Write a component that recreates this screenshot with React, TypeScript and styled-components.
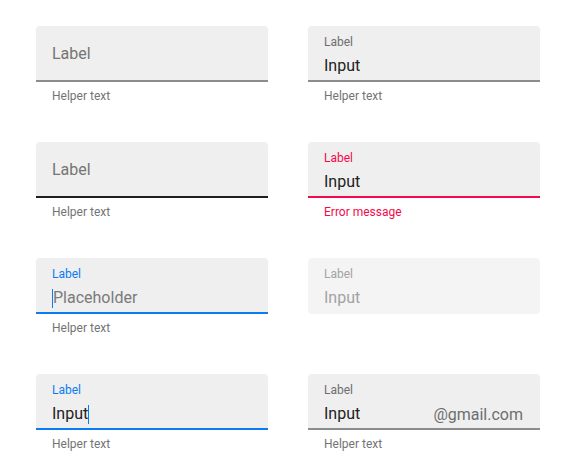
import React from "react";
import styled, { createGlobalStyle, css } from "styled-components";

const Global = createGlobalStyle`
  html, body { margin: 0; padding: 0; background: #ffffff; }
  body { font-family: Roboto, "Noto Sans", sans-serif; }
`;

type Tone = "idle" | "hover" | "focus" | "error" | "disabled";

const BLUE = "#0a7cf2";
const RED = "#f5094d";

const Page = styled.div`
  display: grid;
  grid-template-columns: 232px 232px;
  column-gap: 40px;
  row-gap: 34px;
  padding: 26px 0 0 36px;
`;

const Cell = styled.div`
  display: flex;
  flex-direction: column;
  height: 82px;
`;

const Box = styled.div<{ $tone: Tone; $floating?: boolean }>`
  position: relative;
  box-sizing: border-box;
  height: 56px;
  padding: ${(p) => (p.$floating ? "9px 16px 0" : "0 16px")};
  border-radius: 4px 4px 0 0;
  background: ${(p) => (p.$tone === "disabled" ? "#f4f4f4" : "#efefef")};
  border-bottom: 2px solid
    ${(p) =>
      p.$tone === "disabled"
        ? "transparent"
        : p.$tone === "hover"
        ? "#1f1f1f"
        : p.$tone === "focus"
        ? BLUE
        : p.$tone === "error"
        ? RED
        : "#8c8c8c"};
  display: flex;
  flex-direction: column;
  justify-content: ${(p) => (p.$floating ? "flex-start" : "center")};
  ${(p) =>
    p.$tone === "disabled" &&
    css`
      border-radius: 4px;
    `}
`;

const RestLabel = styled.div`
  font-size: 16px;
  color: #757575;
  line-height: 20px;
  padding-top: 1px;
`;

const FloatLabel = styled.div<{ $tone: Tone }>`
  font-size: 12px;
  line-height: 14px;
  color: ${(p) =>
    p.$tone === "focus"
      ? BLUE
      : p.$tone === "error"
      ? RED
      : p.$tone === "disabled"
      ? "#a3a3a3"
      : "#6e6e6e"};
`;

const ValueRow = styled.div`
  display: flex;
  align-items: center;
  justify-content: space-between;
  margin-top: 7px;
  height: 20px;
`;

const Value = styled.span<{ $muted?: "placeholder" | "disabled" }>`
  display: inline-flex;
  align-items: center;
  font-size: 16px;
  line-height: 20px;
  color: ${(p) =>
    p.$muted === "placeholder"
      ? "#7a7a7a"
      : p.$muted === "disabled"
      ? "#a3a3a3"
      : "#222222"};
`;

const Caret = styled.span`
  display: inline-block;
  width: 1px;
  height: 19px;
  background: ${BLUE};
`;

const Suffix = styled.span`
  font-size: 16px;
  color: #6e6e6e;
  padding-right: 1px;
`;

const Helper = styled.div<{ $error?: boolean }>`
  font-size: 12px;
  line-height: 14px;
  padding: 7px 16px 0;
  color: ${(p) => (p.$error ? RED : "#747474")};
`;

type FieldProps = {
  tone: Tone;
  floating?: boolean;
  value?: string;
  placeholder?: string;
  caret?: "before" | "after";
  suffix?: string;
  helper?: string;
  error?: boolean;
};

function Field({ tone, floating, value, placeholder, caret, suffix, helper, error }: FieldProps) {
  return (
    <Cell>
      <Box $tone={tone} $floating={floating}>
        {floating ? (
          <>
            <FloatLabel $tone={tone}>Label</FloatLabel>
            <ValueRow>
              <Value $muted={placeholder ? "placeholder" : tone === "disabled" ? "disabled" : undefined}>
                {caret === "before" && <Caret />}
                {placeholder ?? value}
                {caret === "after" && <Caret />}
              </Value>
              {suffix && <Suffix>{suffix}</Suffix>}
            </ValueRow>
          </>
        ) : (
          <RestLabel>Label</RestLabel>
        )}
      </Box>
      {helper && <Helper $error={error}>{helper}</Helper>}
    </Cell>
  );
}

export default function App() {
  return (
    <>
      <Global />
      <Page>
        <Field tone="idle" helper="Helper text" />
        <Field tone="idle" floating value="Input" helper="Helper text" />
        <Field tone="hover" helper="Helper text" />
        <Field tone="error" floating value="Input" helper="Error message" error />
        <Field tone="focus" floating placeholder="Placeholder" caret="before" helper="Helper text" />
        <Field tone="disabled" floating value="Input" />
        <Field tone="focus" floating value="Input" caret="after" helper="Helper text" />
        <Field tone="idle" floating value="Input" suffix="@gmail.com" helper="Helper text" />
      </Page>
    </>
  );
}
